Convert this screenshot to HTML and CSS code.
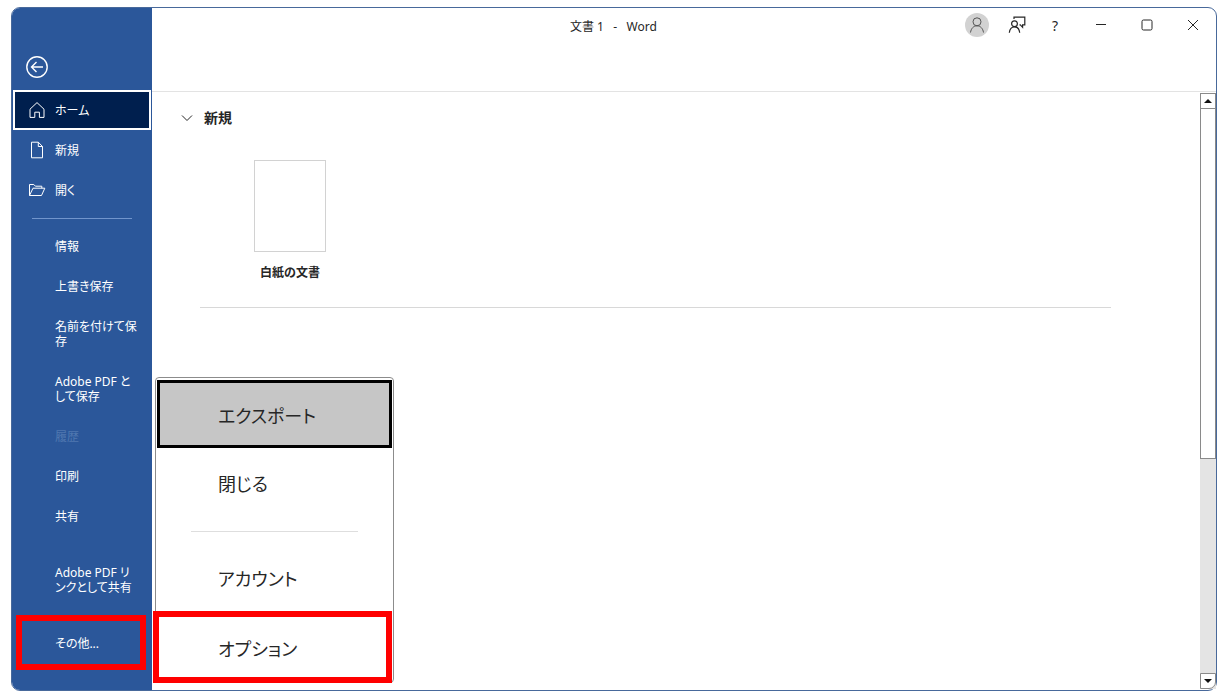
FILE: index.html
```html
<!DOCTYPE html>
<html lang="ja">
  <head>
    <meta charset="UTF-8" />
    <meta name="viewport" content="width=device-width, initial-scale=1.0" />
    <title>文書 1 - Word</title>
    <link rel="stylesheet" href="styles.css">
  </head>
  <body>
    <div class="window">
      <aside class="sidebar">
        <button class="back" type="button" aria-label="戻る">
          <svg width="24" height="24" viewBox="0 0 24 24"><circle cx="12" cy="12" r="10.2" /><path d="M18 12H6.5M11.5 7l-5 5 5 5" /></svg>
        </button>
        <nav class="nav">
          <button class="nav_item nav_icon active" type="button">
            <svg width="18" height="18" viewBox="0 0 18 18"><path d="M2 8.2 9 1.6l7 6.6v8.2h-4.6v-5.2H6.8v5.2H2z" /></svg>
            <span>ホーム</span>
          </button>
          <button class="nav_item nav_icon" type="button">
            <svg width="18" height="18" viewBox="0 0 18 18"><path d="M3.5 1.2h6.8l4.2 4.3v11.3h-11zM10.3 1.2v4.3h4.2" /></svg>
            <span>新規</span>
          </button>
          <button class="nav_item nav_icon" type="button">
            <svg width="18" height="18" viewBox="0 0 18 18"><path d="M1.5 14.5v-11h4.3l1.6 1.7h6.4v2M1.5 14.5 5 7.2h11.8l-3.3 7.3z" /></svg>
            <span>開く</span>
          </button>
          <hr class="nav_line">
          <button class="nav_item" type="button">情報</button>
          <button class="nav_item" type="button">上書き保存</button>
          <button class="nav_item" type="button">名前を付けて保<br>存</button>
          <button class="nav_item" type="button">Adobe PDF と<br>して保存</button>
          <button class="nav_item" type="button" disabled>履歴</button>
          <button class="nav_item" type="button">印刷</button>
          <button class="nav_item" type="button">共有</button>
          <button class="nav_item nav_share" type="button">Adobe PDF リ<br>ンクとして共有</button>
          <button class="nav_item nav_more" type="button">その他...</button>
        </nav>
      </aside>

      <div class="main">
        <header class="titlebar">
          <h1 class="title">文書 1&nbsp;&nbsp; -&nbsp;&nbsp; Word</h1>
          <div class="tools">
            <button class="avatar" type="button" aria-label="アカウント">
              <svg width="18" height="18" viewBox="0 0 18 18"><circle cx="9" cy="5.8" r="4" /><path d="M2.5 16.5c.6-4 3-6.7 6.5-6.7s5.9 2.7 6.5 6.7" /></svg>
            </button>
            <button class="tool" type="button" aria-label="フィードバック">
              <svg width="18" height="18" viewBox="0 0 18 18"><circle cx="6.5" cy="7.8" r="2.9" /><path d="M1.3 16.8c.4-3.6 2.3-6 5.2-6s4.8 2.4 5.2 6M6 3V1.2h10.8v7.6h-2.2v2.5l-2.3-2.5h-.8" /></svg>
            </button>
            <button class="tool help" type="button" aria-label="ヘルプ">?</button>
            <button class="control" type="button" aria-label="最小化">
              <svg width="12" height="12" viewBox="0 0 12 12"><path d="M1 5.500h10" /></svg>
            </button>
            <button class="control" type="button" aria-label="最大化">
              <svg width="12" height="12" viewBox="0 0 12 12"><rect x="1" y="1" width="10" height="10" rx="1.5" /></svg>
            </button>
            <button class="control" type="button" aria-label="閉じる">
              <svg width="12" height="12" viewBox="0 0 12 12"><path d="M1 1l10 10M11 1 1 11" /></svg>
            </button>
          </div>
        </header>

        <div class="body">
          <main class="content">
            <h2 class="heading">
              <svg width="12" height="12" viewBox="0 0 12 12"><path d="M1 3.500l5 5 5-5" /></svg>
              新規
            </h2>
            <button class="template" type="button">
              <span class="paper"></span>
              <span>白紙の文書</span>
            </button>
            <hr class="content_line">
          </main>
          <div class="scrollbar">
            <button class="scroll_btn" type="button" aria-label="上へ">
              <svg width="8" height="4" viewBox="0 0 8 4"><path d="M0 4l4-4 4 4z" /></svg>
            </button>
            <div class="scroll_track"><div class="scroll_thumb"></div></div>
            <button class="scroll_btn" type="button" aria-label="下へ">
              <svg width="8" height="4" viewBox="0 0 8 4"><path d="M0 0l4 4 4-4z" /></svg>
            </button>
          </div>
        </div>
      </div>

      <div class="popup">
        <button class="popup_item selected" type="button">エクスポート</button>
        <button class="popup_item" type="button">閉じる</button>
        <hr class="popup_line">
        <button class="popup_item" type="button">アカウント</button>
        <button class="popup_item marked" type="button">オプション</button>
      </div>
    </div>
  </body>
</html>
```
FILE: styles.css
```css
* {
  margin: 0;
  padding: 0;
  box-sizing: border-box;
}
body {
  display: flex;
  min-height: 100vh;
  padding: 7px 12px 8px 11px;
  background: #fff;
  color: #262626;
  font-family: "Noto Sans", "Noto Sans CJK JP", sans-serif;
  font-size: 12px;
  line-height: 15px;
  font-feature-settings: "palt";
}
button {
  border: 0;
  background: none;
  color: inherit;
  font: inherit;
  font-feature-settings: inherit;
}
hr {
  border: 0;
}
svg {
  display: block;
  flex: none;
  fill: none;
  stroke: currentColor;
}
.window {
  position: relative;
  display: flex;
  flex: 1;
  border: 1px solid #48699b;
  border-radius: 9px;
}

/* 左メニュー */
.sidebar {
  flex: none;
  width: 140px;
  padding: 47px 0 18px;
  border-radius: 8px 0 0 8px;
  background: #2b579a;
  color: #fff;
}
.back {
  display: block;
  margin: 0 0 11px 13px;
}
.back svg {
  stroke-width: 1.4;
}
.nav {
  display: flex;
  flex-direction: column;
}
.nav_item {
  min-height: 40px;
  padding: 13px 0 12px 43px;
  text-align: left;
  white-space: nowrap;
}
.nav_item:disabled {
  color: #5077b0;
}
.nav_icon {
  display: flex;
  align-items: center;
  gap: 9px;
  padding: 0 0 0 16px;
}
.active {
  margin: 0 1px;
  padding-left: 13px;
  border: 2px solid #fff;
  background: #001f4e;
}
.nav_line {
  height: 1px;
  margin: 8px 20px 7px;
  background: #7195cc;
}
.nav_share {
  margin-top: 16px;
}
.nav_more {
  margin: 8px 6px 0 4px;
  padding: 15px 0 13px 33px;
  border: 6px solid #f00;
}

/* タイトルバー */
.main {
  display: flex;
  flex: 1;
  flex-direction: column;
}
.titlebar {
  display: flex;
  align-items: flex-start;
  height: 84px;
  padding-top: 4px;
  border-bottom: 1px solid #e3e3e3;
}
.title {
  flex: 1;
  padding: 7px 0 0 418px;
  font-size: 12px;
  font-weight: 400;
}
.tools {
  display: flex;
  align-items: center;
}
.avatar {
  display: grid;
  place-items: center;
  width: 24px;
  height: 24px;
  margin-right: 9px;
  border-radius: 50%;
  background: #d2d2d2;
  color: #555;
}
.tool,
.control {
  display: grid;
  place-items: center;
  width: 38px;
  height: 26px;
}
.tool svg {
  stroke-width: 1.2;
}
.help {
  margin-right: 4px;
  font-size: 14px;
}
.control {
  width: 46px;
}

/* 本文 */
.body {
  display: flex;
  flex: 1;
}
.content {
  flex: 1;
  padding: 16px 89px 0 29px;
}
.heading {
  display: flex;
  align-items: center;
  gap: 11px;
  font-size: 14px;
  line-height: 20px;
}
.template {
  display: flex;
  flex-direction: column;
  align-items: center;
  gap: 13px;
  width: 92px;
  margin: 32px 0 27px 63px;
  font-weight: 700;
}
.paper {
  width: 72px;
  height: 92px;
  border: 1px solid #d2d2d2;
}
.content_line {
  height: 1px;
  margin-left: 19px;
  background: #d8d8d8;
}

/* スクロールバー */
.scrollbar {
  display: flex;
  flex-direction: column;
  width: 16px;
  margin: 1px 0;
  background: #e4e4e4;
}
.scroll_btn {
  display: grid;
  place-items: center;
  height: 16px;
  border: 1px solid #8a8a8a;
  background: #fff;
}
.scroll_btn:last-child {
  border-radius: 0 0 7px 0;
}
.scroll_btn svg {
  fill: #111;
  stroke: none;
}
.scroll_track {
  flex: 1;
}
.scroll_thumb {
  height: 62%;
  border: 1px solid #8a8a8a;
  border-top: 0;
  background: #fff;
}

/* その他メニュー */
.popup {
  position: absolute;
  bottom: 7px;
  left: 143px;
  display: flex;
  flex-direction: column;
  width: 239px;
  padding: 2px 1px 0;
  border: 1px solid #8c8c8c;
  border-radius: 4px;
  background: #fff;
}
.popup_item {
  height: 68px;
  padding: 4px 0 0 61px;
  font-size: 18px;
  line-height: 30px;
  text-align: left;
}
.selected {
  padding-left: 58px;
  border: 3px solid #000;
  background: #c6c6c6;
}
.popup_line {
  height: 1px;
  margin: 15px 34px 11px;
  background: #dedede;
}
.marked {
  height: 72px;
  margin: 0 0 -1px -4px;
  padding-left: 59px;
  border: 6px solid #f00;
}
```
